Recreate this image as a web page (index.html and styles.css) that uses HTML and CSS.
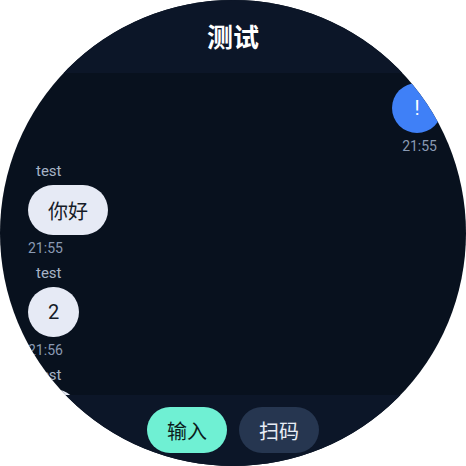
FILE: index.html
```html
<!DOCTYPE html>
<html lang="zh">
<head>
<meta charset="utf-8">
<link rel="stylesheet" href="styles.css">
</head>
<body>
<div class="watch">
  <header class="header"><h1 class="title">测试</h1></header>
  <main class="messages">
    <div class="msg msg-own">
      <div class="bubble bubble-own">!</div>
      <div class="time">21:55</div>
    </div>
    <div class="msg">
      <div class="sender">test</div>
      <div class="bubble">你好</div>
      <div class="time">21:55</div>
    </div>
    <div class="msg">
      <div class="sender">test</div>
      <div class="bubble">2</div>
      <div class="time">21:56</div>
    </div>
    <div class="msg">
      <div class="sender">test</div>
      <div class="bubble">3</div>
      <div class="time">21:56</div>
    </div>
  </main>
  <footer class="footer">
    <button class="btn btn-primary">输入</button>
    <button class="btn btn-secondary">扫码</button>
  </footer>
</div>
</body>
</html>
```
FILE: styles.css
```css
* { box-sizing: border-box; }
html, body {
  margin: 0;
  padding: 0;
  background: #ffffff;
}
body {
  font-family: Roboto, "Noto Sans CJK SC", sans-serif;
}
.watch {
  width: 466px;
  height: 466px;
  border-radius: 50%;
  overflow: hidden;
  background: #08111e;
  display: flex;
  flex-direction: column;
}
.header {
  height: 73px;
  flex: none;
  background: #0c1628;
  display: flex;
  justify-content: center;
  padding-top: 20px;
}
.title {
  margin: 0;
  font-family: "Noto Sans CJK SC", sans-serif;
  font-size: 26px;
  line-height: 32px;
  font-weight: 700;
  color: #ffffff;
}
.messages {
  flex: 1;
  min-height: 0;
  overflow: hidden;
  padding: 10px 24px 0 28px;
  display: flex;
  flex-direction: column;
  gap: 8px;
}
.msg {
  display: flex;
  flex-direction: column;
  align-items: flex-start;
  flex: none;
}
.msg-own {
  align-items: flex-end;
}
.sender {
  font-size: 15px;
  line-height: 18px;
  color: #a6b3c6;
  padding-left: 8px;
  margin-bottom: 5px;
}
.bubble {
  height: 50px;
  min-width: 50px;
  padding: 0 20px;
  border-radius: 25px;
  background: #e6eaf5;
  color: #161b27;
  font-size: 20px;
  display: flex;
  align-items: center;
  justify-content: center;
}
.bubble-own {
  background: #3f80f7;
  color: #ffffff;
}
.time {
  margin-top: 5px;
  font-size: 14px;
  line-height: 16px;
  color: #8a9ab3;
}
.msg-own .time {
  padding-right: 5px;
}
.footer {
  height: 71px;
  flex: none;
  background: #0c1628;
  display: flex;
  justify-content: center;
  align-items: flex-start;
  gap: 12px;
  padding-top: 12px;
}
.btn {
  width: 80px;
  height: 46px;
  border: none;
  border-radius: 23px;
  font-family: "Noto Sans CJK SC", sans-serif;
  font-size: 20px;
  padding: 0;
}
.btn-primary {
  background: #6ff0d3;
  color: #0b1c1c;
}
.btn-secondary {
  background: #263650;
  color: #e8edf6;
}
```
